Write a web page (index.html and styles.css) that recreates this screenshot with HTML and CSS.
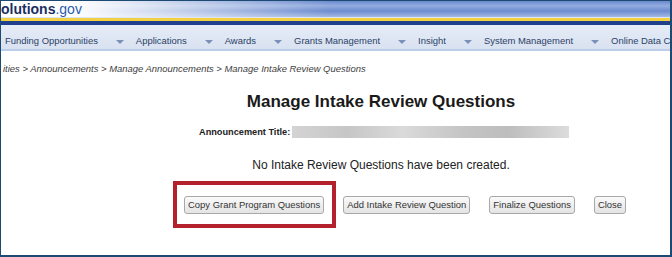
FILE: index.html
```html
<!DOCTYPE html>
<html lang="en">
<head>
<meta charset="utf-8">
<title>Manage Intake Review Questions</title>
<link rel="stylesheet" href="styles.css">
</head>
<body>
<div class="frame">
  <header class="brand"><span class="brand-name">olutions</span><span class="brand-tld">.gov</span></header>
  <div class="rule-light"></div>
  <div class="rule-yellow"></div>
  <div class="rule-navy"></div>
  <nav class="menu">
    <span class="menu-item">Funding Opportunities</span><svg class="caret" viewBox="0 0 8 4"><polygon points="0,0 8,0 4,4"/></svg>
    <span class="menu-item">Applications</span><svg class="caret" viewBox="0 0 8 4"><polygon points="0,0 8,0 4,4"/></svg>
    <span class="menu-item">Awards</span><svg class="caret" viewBox="0 0 8 4"><polygon points="0,0 8,0 4,4"/></svg>
    <span class="menu-item">Grants Management</span><svg class="caret" viewBox="0 0 8 4"><polygon points="0,0 8,0 4,4"/></svg>
    <span class="menu-item">Insight</span><svg class="caret" viewBox="0 0 8 4"><polygon points="0,0 8,0 4,4"/></svg>
    <span class="menu-item">System Management</span><svg class="caret" viewBox="0 0 8 4"><polygon points="0,0 8,0 4,4"/></svg>
    <span class="menu-item">Online Data Collection</span>
  </nav>
  <div class="crumbs">ities &gt; Announcements &gt; Manage Announcements &gt; Manage Intake Review Questions</div>
  <main class="content">
    <h1 class="title">Manage Intake Review Questions</h1>
    <div class="ann-row">
      <span class="ann-label">Announcement Title:</span>
      <span class="redacted"></span>
    </div>
    <p class="empty">No Intake Review Questions have been created.</p>
    <div class="actions">
      <span class="highlight"><button class="btn">Copy Grant Program Questions</button></span>
      <button class="btn">Add Intake Review Question</button>
      <button class="btn">Finalize Questions</button>
      <button class="btn">Close</button>
    </div>
  </main>
</div>
</body>
</html>
```

FILE: styles.css
```css
* { box-sizing: border-box; }
html, body { margin: 0; padding: 0; background: #fff; overflow: hidden; }
body { font-family: "Liberation Sans", Arial, sans-serif; }

.frame {
  width: 672px;
  height: 257px;
  border-style: solid;
  border-color: #1c4a72;
  border-width: 1px 2px 2px 1px;
  overflow: hidden;
  background: #fff;
}

.brand {
  height: 16px;
  line-height: 16px;
  font-size: 14px;
  white-space: nowrap;
  background:
    linear-gradient(90deg, #fff 0, #fff 70px, rgba(255,255,255,0) 330px),
    linear-gradient(180deg, #6a88cd 0, #94addf 30%, #6d8ccf 62%, #a3b8e4 100%);
}
.brand-name { font-weight: bold; color: #1b2f63; }
.brand-tld { color: #2a5cb0; }

.rule-light { height: 1px; background: #dfe6f3; }
.rule-yellow { height: 3px; background: #f3cf42; }
.rule-navy { height: 4px; background: #203f8c; }

.menu {
  display: flex;
  align-items: flex-start;
  height: 26px;
  padding: 10px 0 0 4px;
  background: linear-gradient(180deg, #e6ecf7 0, #d9e2f1 100%);
  border-bottom: 2px solid #bccde9;
  white-space: nowrap;
  overflow: hidden;
}
.menu-item {
  font-size: 9.45px;
  line-height: 12px;
  color: #2a3f66;
  flex: none;
}
.caret {
  flex: none;
  width: 8px;
  height: 4px;
  margin: 5px 12px 0 18px;
  fill: #7a90b8;
}

.crumbs {
  margin-top: 12px;
  padding-left: 2px;
  font-size: 9.45px;
  line-height: 12px;
  font-style: italic;
  color: #404040;
  white-space: nowrap;
}

.content { width: 760px; }

.title {
  margin: 17px 0 0;
  font-size: 17px;
  line-height: 20px;
  font-weight: bold;
  color: #1a1a1a;
  text-align: center;
}

.ann-row {
  display: flex;
  align-items: flex-start;
  margin-top: 14px;
  padding-left: 198px;
  height: 12px;
}
.ann-label {
  font-size: 9.2px;
  line-height: 12px;
  font-weight: bold;
  color: #222;
}
.redacted {
  margin-left: 2px;
  width: 277px;
  height: 12px;
  background: linear-gradient(90deg, #d4d4d4 0, #c6c6c6 20%, #dadada 40%, #c4c4c4 62%, #bdbdbd 78%, #dcdcdc 100%);
}

.empty {
  margin: 20px 0 0;
  font-size: 12px;
  line-height: 14px;
  color: #222;
  text-align: center;
}

.actions {
  display: flex;
  align-items: flex-start;
  gap: 19px;
  margin-top: 24px;
  padding-left: 183px;
}
.highlight { position: relative; display: flex; }
.highlight::after {
  content: "";
  position: absolute;
  top: -15px;
  bottom: -14px;
  left: -11px;
  right: -12px;
  border: 4px solid #b3222c;
}
.btn {
  height: 18px;
  margin: 0;
  padding: 0 3px;
  font-family: "Liberation Sans", Arial, sans-serif;
  font-size: 9.45px;
  line-height: 16px;
  color: #333;
  background: linear-gradient(180deg, #fafafa 0, #e4e4e4 100%);
  border: 1px solid #a8a8a8;
  border-radius: 3px;
  white-space: nowrap;
}
```
